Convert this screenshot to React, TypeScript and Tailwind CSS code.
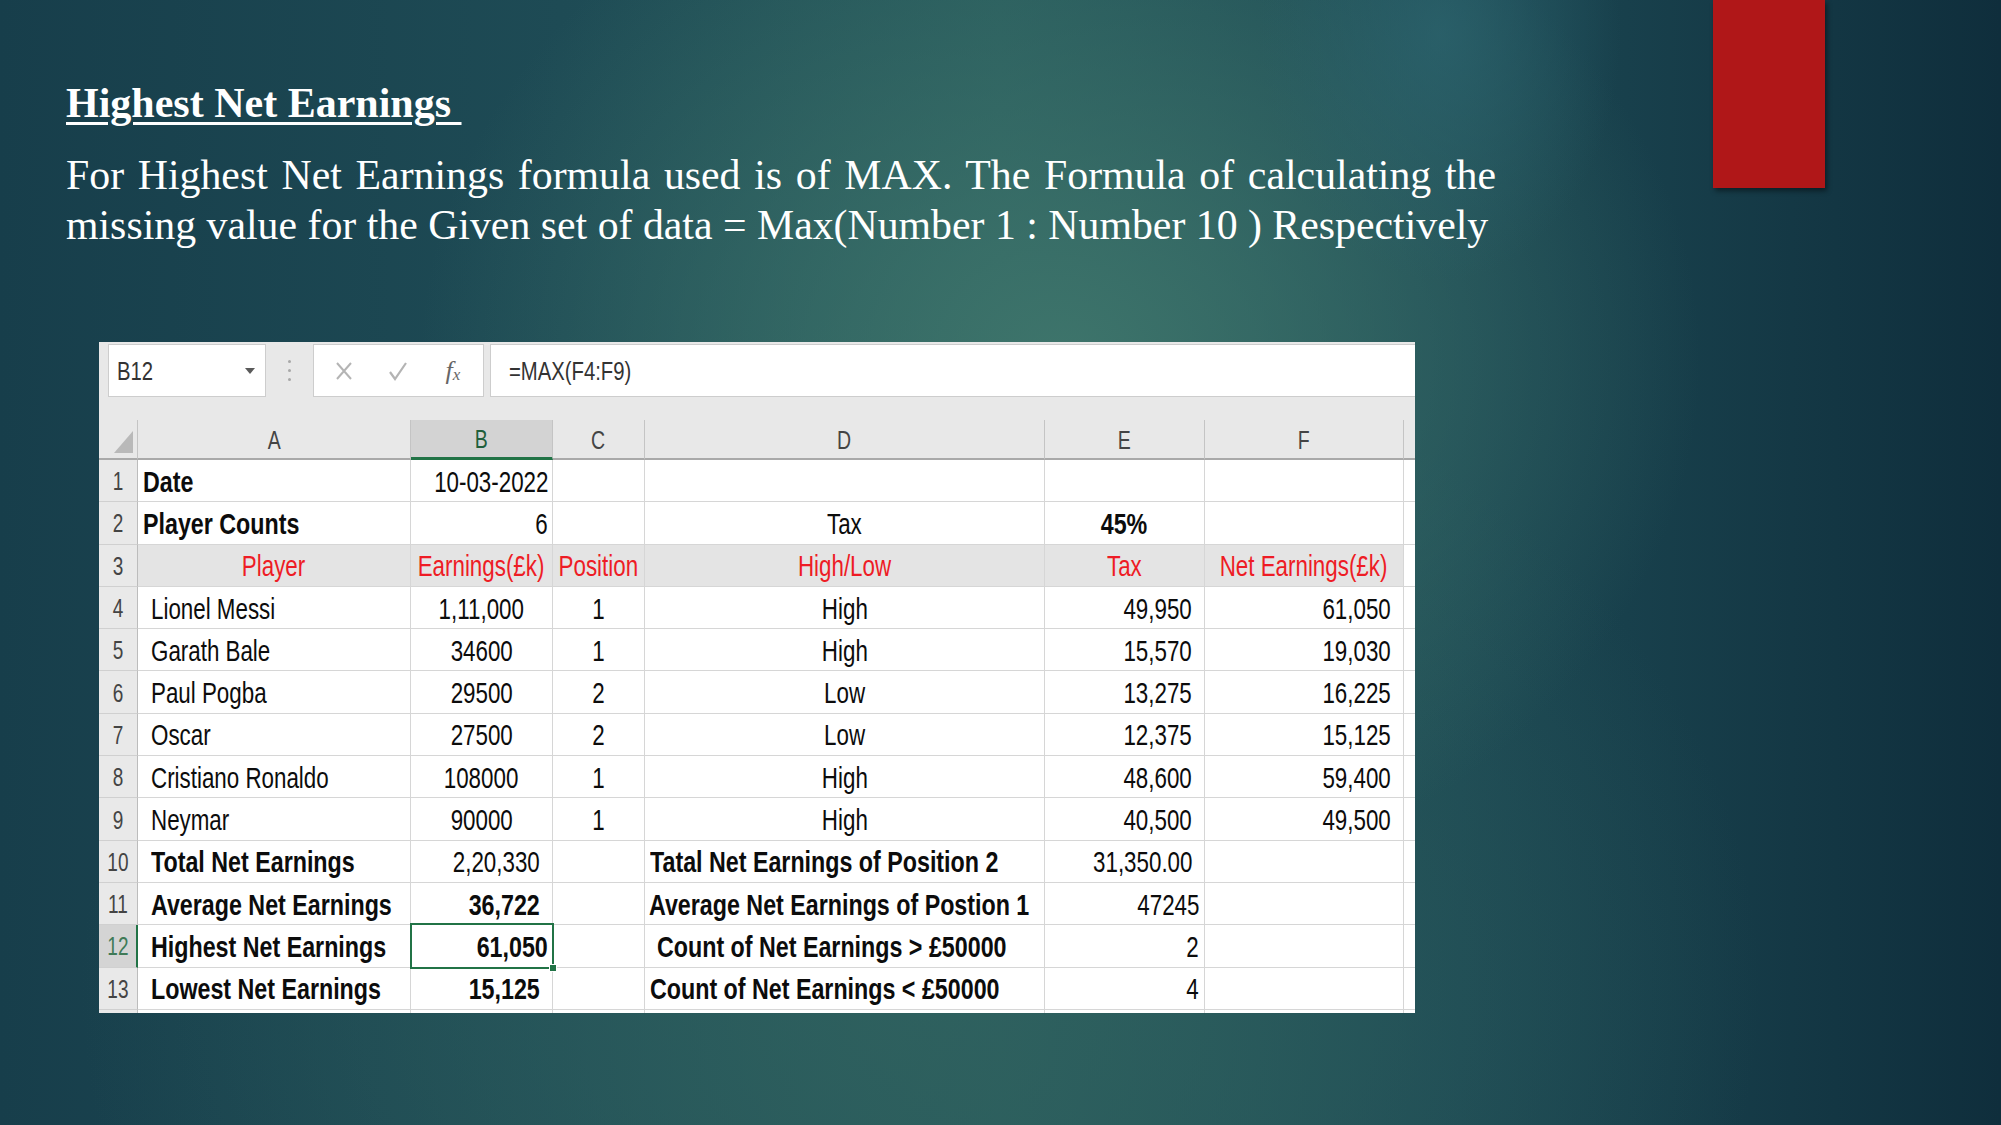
import React from "react";

type Align = "l" | "c" | "r";
type Cell = { t: string; a: Align; b?: boolean; red?: boolean; pad?: string } | null;

// column widths: row header, A, B, C, D, E, F, partial G
const COLS = "grid grid-cols-[39px_273px_142px_92px_400px_160px_199px_11px]";

const L = (t: string, b = false, pad = "pl-[5px]"): Cell => ({ t, a: "l", b, pad });
const R = (t: string, b = false, pad = "pr-[12px]"): Cell => ({ t, a: "r", b, pad });
const C = (t: string, b = false): Cell => ({ t, a: "c", b });
const H = (t: string): Cell => ({ t, a: "c", red: true });

const players = [
  ["Lionel Messi", "1,11,000", "1", "High", "49,950", "61,050"],
  ["Garath Bale", "34600", "1", "High", "15,570", "19,030"],
  ["Paul Pogba", "29500", "2", "Low", "13,275", "16,225"],
  ["Oscar", "27500", "2", "Low", "12,375", "15,125"],
  ["Cristiano Ronaldo", "108000", "1", "High", "48,600", "59,400"],
  ["Neymar", "90000", "1", "High", "40,500", "49,500"],
];

const rows: Cell[][] = [
  [L("Date", true), R("10-03-2022", false, "pr-[4px]"), null, null, null, null],
  [L("Player Counts", true), R("6", false, "pr-[4px]"), null, C("Tax"), C("45%", true), null],
  [H("Player"), H("Earnings(£k)"), H("Position"), H("High/Low"), H("Tax"), H("Net Earnings(£k)")],
  ...players.map((p) => [
    L(p[0], false, "pl-[13px]"),
    C(p[1]),
    C(p[2]),
    C(p[3]),
    R(p[4]),
    R(p[5], false, "pr-[12px]"),
  ]),
  [L("Total Net Earnings", true, "pl-[13px]"), R("2,20,330"), null, L("Tatal Net Earnings of Position 2", true), R("31,350.00"), null],
  [L("Average Net Earnings", true, "pl-[13px]"), R("36,722", true), null, L("Average Net Earnings of Postion 1", true, "pl-[4px]"), R("47245", false, "pr-[5px]"), null],
  [L("Highest Net Earnings", true, "pl-[13px]"), R("61,050", true, "pr-[4px]"), null, L("Count of Net Earnings > £50000", true, "pl-[12px]"), R("2", false, "pr-[5px]"), null],
  [L("Lowest Net Earnings", true, "pl-[13px]"), R("15,125", true), null, L("Count of Net Earnings < £50000", true), R("4", false, "pr-[5px]"), null],
];

const sans = "font-['Liberation_Sans',Arial,sans-serif]";

function CellText({ c }: { c: NonNullable<Cell> }) {
  const origin = c.a === "l" ? "origin-left" : c.a === "r" ? "origin-right" : "origin-center";
  return (
    <span
      className={`inline-block whitespace-nowrap text-[30px] leading-none ${origin} ${
        c.b ? "font-bold scale-x-[0.775]" : "scale-x-[0.745]"
      } ${c.red ? "text-[#ee1c25]" : "text-[#0c0c0c]"}`}
    >
      {c.t}
    </span>
  );
}

function DataRow({ cells, n }: { cells: Cell[]; n: number }) {
  const selectedRow = n === 12;
  return (
    <div className={`${COLS} h-[42.3px]`}>
      <div
        className={`flex items-center justify-center border-b border-[#d0d0d0] pt-[2px] ${
          selectedRow
            ? "bg-[#d4d4d4] border-r-2 border-r-[#217346] text-[#3f7a57]"
            : "bg-[#e9e9e9] border-r border-r-[#bcbcbc] text-[#444]"
        }`}
      >
        <span className="inline-block text-[25px] leading-none scale-x-[0.76]">{n}</span>
      </div>
      {cells.map((c, i) => {
        const justify = !c || c.a === "c" ? "justify-center" : c.a === "l" ? "justify-start" : "justify-end";
        return (
          <div
            key={i}
            className={`relative flex min-w-0 items-center border-b border-r border-[#d6d6d6] pt-[2px] ${justify} ${
              c?.pad ?? ""
            } ${n === 3 ? "bg-[#e4e4e4]" : "bg-white"}`}
          >
            {c && <CellText c={c} />}
            {selectedRow && i === 1 && (
              <div className="absolute left-[-1px] top-[-2px] right-[-2px] bottom-[-2px] z-10 border-2 border-[#217346]">
                <div className="absolute right-[-5px] bottom-[-5px] h-[8px] w-[8px] border border-white bg-[#217346]" />
              </div>
            )}
          </div>
        );
      })}
      <div className="border-b border-[#d6d6d6] bg-white" />
    </div>
  );
}

function FormulaBar() {
  return (
    <div className="flex h-[78px] items-start bg-[#e8e8e8] pl-[9px] pt-[2px]">
      <div className="flex h-[53px] w-[158px] items-center justify-between border border-[#cdcdcd] bg-white pl-[8px] pr-[9px]">
        <span className="inline-block origin-left scale-x-[0.78] text-[26px] leading-none text-[#333]">B12</span>
        <svg width="12" height="8" viewBox="0 0 12 8">
          <path d="M1 1h10L6 7z" fill="#5a5a5a" />
        </svg>
      </div>
      <div className="flex h-[53px] w-[47px] flex-col items-center justify-center gap-[6px]">
        <span className="h-[3px] w-[3px] rounded-full bg-[#a8a8a8]" />
        <span className="h-[3px] w-[3px] rounded-full bg-[#a8a8a8]" />
        <span className="h-[3px] w-[3px] rounded-full bg-[#a8a8a8]" />
      </div>
      <div className="flex h-[53px] w-[171px] items-center border border-[#cdcdcd] bg-white">
        <div className="flex w-[58px] justify-center pl-[2px]">
          <svg width="18" height="20" viewBox="0 0 18 20">
            <path d="M2 2l14 16M16 2L2 18" stroke="#b4b4b4" strokeWidth="2" fill="none" />
          </svg>
        </div>
        <div className="flex w-[52px] justify-center">
          <svg width="20" height="20" viewBox="0 0 20 20">
            <path d="M2 11l5 7L18 2" stroke="#b4b4b4" strokeWidth="2.2" fill="none" />
          </svg>
        </div>
        <div className="flex w-[58px] justify-center font-['Liberation_Serif',serif] italic text-[#666]">
          <span className="text-[26px] leading-none">f</span>
          <span className="mt-[8px] text-[17px] leading-none">x</span>
        </div>
      </div>
      <div className="ml-[6px] flex h-[53px] flex-1 items-center border-y border-l border-[#cdcdcd] bg-white pl-[18px]">
        <span className="inline-block origin-left scale-x-[0.78] text-[26px] leading-none text-[#333]">=MAX(F4:F9)</span>
      </div>
    </div>
  );
}

function ColumnHeader() {
  const letters = ["A", "B", "C", "D", "E", "F"];
  return (
    <div className={`${COLS} h-[40px] bg-[#e8e8e8]`}>
      <div className="relative border-b-2 border-r border-[#a9a9a9] border-r-[#c4c4c4]">
        <svg className="absolute right-[4px] bottom-[5px]" width="19" height="22" viewBox="0 0 19 22">
          <path d="M19 0v22H0z" fill="#b9b9b9" />
        </svg>
      </div>
      {letters.map((l) => (
        <div
          key={l}
          className={`flex items-center justify-center border-r border-r-[#c4c4c4] pt-[2px] ${
            l === "B"
              ? "border-b-[3px] border-b-[#217346] bg-[#d3d3d3] text-[#1f5f3b]"
              : "border-b-2 border-b-[#a9a9a9] text-[#444]"
          }`}
        >
          <span className="inline-block scale-x-[0.78] text-[25px] leading-none">{l}</span>
        </div>
      ))}
      <div className="border-b-2 border-b-[#a9a9a9]" />
    </div>
  );
}

function Spreadsheet() {
  return (
    <div className={`ml-[33px] mt-[92px] w-[1316px] overflow-hidden bg-white ${sans}`}>
      <FormulaBar />
      <ColumnHeader />
      {rows.map((cells, i) => (
        <DataRow key={i} cells={cells} n={i + 1} />
      ))}
      <div className={`${COLS} h-[3px]`}>
        <div className="border-r border-[#bcbcbc] bg-[#e9e9e9]" />
        {[0, 1, 2, 3, 4, 5].map((i) => (
          <div key={i} className="border-r border-[#d6d6d6]" />
        ))}
        <div />
      </div>
    </div>
  );
}

export default function App() {
  return (
    <div className="relative h-[1125px] w-[2001px] overflow-hidden bg-[#1d4752] bg-[image:radial-gradient(ellipse_9%_22%_at_72%_3%,rgba(44,100,110,0.75),transparent),radial-gradient(ellipse_32%_48%_at_53%_32%,rgba(63,118,108,0.95),transparent),radial-gradient(ellipse_42%_60%_at_46%_88%,rgba(48,98,95,0.85),transparent),linear-gradient(90deg,#173e4b_0%,#1e4b55_28%,#275a5c_50%,#1c4853_73%,#0f2e3c_100%)]">
      <div className="absolute right-[176px] top-0 h-[188px] w-[112px] bg-[#b01718] shadow-[2px_3px_5px_rgba(0,0,0,0.45)]" />
      <div className="pl-[66px] pt-[82px]">
        <h1 className="whitespace-pre font-['Liberation_Serif',serif] text-[42px] font-bold leading-none text-white underline decoration-[3px] underline-offset-[5px]">
          {"Highest Net Earnings "}
        </h1>
        <p className="mt-[26px] w-[1430px] text-justify font-['Liberation_Serif',serif] text-[41.8px] leading-[50px] text-white">
          For Highest Net Earnings formula used is of MAX. The Formula of calculating the missing value for the Given
          set of data = Max(Number 1 : Number 10 ) Respectively
        </p>
        <Spreadsheet />
      </div>
    </div>
  );
}
